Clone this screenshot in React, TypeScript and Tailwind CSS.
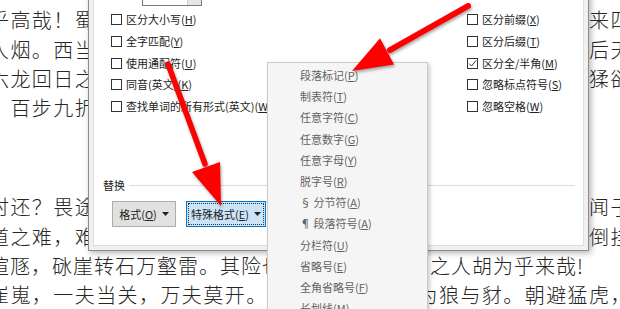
import React from 'react';

const docFont = { fontFamily: '"Noto Sans CJK SC", "Noto Sans", sans-serif' };

// one line of the document; the part under the dialog keeps its room but isn't painted
function DocLine({
  left,
  hidden = '',
  right = '',
  wide = true,
}: {
  left: string;
  hidden?: string;
  right?: string;
  wide?: boolean;
}) {
  return (
    <div
      className={`ml-[-11px] h-[29.3px] whitespace-nowrap text-[20px] leading-[29.3px] font-light text-[#262626] ${
        wide ? 'tracking-[1.43px]' : 'tracking-[1px]'
      }`}
    >
      {left}
      <span className="invisible">{hidden}</span>
      {right}
    </div>
  );
}

function Key({ k }: { k: string }) {
  return (
    <>
      (<span className="underline underline-offset-[1px]">{k}</span>)
    </>
  );
}

function CheckRow({ label, k, checked = false }: { label: string; k: string; checked?: boolean }) {
  return (
    <div className="flex h-[21.7px] items-center gap-[4px]">
      <span className="flex h-[11px] w-[11px] items-center justify-center border border-[#333] bg-white">
        {checked && (
          <svg width="9" height="9" viewBox="0 0 9 9">
            <path d="M1.2 4.6 L3.6 7 L7.9 1.6" fill="none" stroke="#333" strokeWidth="1" />
          </svg>
        )}
      </span>
      <span className="whitespace-nowrap">
        {label}
        <Key k={k} />
      </span>
    </div>
  );
}

function Caret() {
  return (
    <svg width="7" height="4" viewBox="0 0 7 4" className="ml-[5px]">
      <path d="M0 0 L7 0 L3.5 4 Z" fill="#222" />
    </svg>
  );
}

const menuItems: [string, string][] = [
  ['段落标记', 'P'],
  ['制表符', 'T'],
  ['任意字符', 'C'],
  ['任意数字', 'G'],
  ['任意字母', 'Y'],
  ['脱字号', 'R'],
  ['§ 分节符', 'A'],
  ['¶ 段落符号', 'A'],
  ['分栏符', 'U'],
  ['省略号', 'E'],
  ['全角省略号', 'F'],
  ['长划线', 'M'],
];

export default function App() {
  return (
    <div className="relative h-[309px] w-[620px] overflow-hidden bg-white" style={docFont}>
      {/* document text */}
      <div className="pt-[5.4px]">
        <DocLine left="乎高哉！蜀" hidden="道之难，难于上青天！蚕丛及鱼凫，开国何茫然！尔" right="来四万八千岁，" />
        <DocLine left="人烟。西当" hidden="太白有鸟道，可以横绝峨眉巅。地崩山摧壮士死，然" right="后天梯石栈相钩连。" />
        <DocLine left="六龙回日之" hidden="高标，下有冲波逆折之回川。黄鹤之飞尚不得过，猿" right="猱欲度愁攀援。" />
        <DocLine left="，百步九折" hidden="萦岩峦。" />
        <div className="h-[69.8px]" />
        <DocLine left="时还？畏途" hidden="巉岩不可攀。但见悲鸟号古木，雄飞雌从绕林间。又" right="闻子规啼夜月，愁空山。" />
        <DocLine left="道之难，难" hidden="于上青天，使人听此凋朱颜！连峰去天不盈尺，枯松" right="倒挂倚绝壁。" />
        <DocLine left="喧豗，砯崖转石万壑雷。其险也" hidden="如此，嗟尔远道" right="之人胡为乎来哉!" wide={false} />
        <DocLine left="崔嵬，一夫当关，万夫莫开。" hidden="所守或匪亲，化" right="为狼与豺。朝避猛虎，夕避长蛇，" />
      </div>

      {/* find & replace dialog */}
      <div className="absolute left-[88px] top-[-40px] h-[291px] w-[501px] border border-[#8c8c8c] bg-[#f0f0f0] p-[4px] shadow-[2px_2px_6px_rgba(0,0,0,0.3)]">
        <div className="flex h-full flex-col border border-[#dedede] bg-white text-[11px] leading-none text-[#222]">
          <div className="pl-[48px] pt-[18px]">
            <div className="flex h-[22px] w-[60px] border border-[#7a7a7a] bg-white">
              <div className="ml-auto w-[14px] border-l border-[#cfcfcf] bg-[#e6e6e6]" />
            </div>
          </div>

          <div className="mt-[3px] flex">
            <div className="w-[373px] pl-[17px]">
              <CheckRow label="区分大小写" k="H" />
              <CheckRow label="全字匹配" k="Y" />
              <CheckRow label="使用通配符" k="U" />
              <CheckRow label="同音(英文)" k="K" />
              <CheckRow label="查找单词的所有形式(英文)" k="W" />
            </div>
            <div>
              <CheckRow label="区分前缀" k="X" />
              <CheckRow label="区分后缀" k="T" />
              <CheckRow label="区分全/半角" k="M" checked />
              <CheckRow label="忽略标点符号" k="S" />
              <CheckRow label="忽略空格" k="W" />
            </div>
          </div>

          <div className="mt-[60px] flex h-[16px] items-center gap-[4px] pl-[9px] pr-[8px]">
            <span>替换</span>
            <div className="h-px flex-1 bg-[#dcdcdc]" />
          </div>

          <div className="mt-[8px] flex gap-[10px] pl-[18px]">
            <div className="flex h-[26px] w-[64px] items-center justify-center border border-[#adadad] bg-[#e1e1e1]">
              格式<Key k="O" />
              <Caret />
            </div>
            <div className="flex h-[26px] w-[80px] items-center justify-center border border-[#0078d7] bg-[#cce4f7] p-[1px]">
              <div className="flex h-full w-full items-center justify-center border border-dotted border-[#333]">
                特殊格式<Key k="E" />
                <Caret />
              </div>
            </div>
          </div>
        </div>
      </div>

      {/* special format menu */}
      <div className="absolute left-[267px] top-[62px] w-[161px] border border-[#cbcbcb] bg-[#f5f5f5] pt-[2px] text-[11px] leading-none text-[#626262] shadow-[2px_2px_4px_rgba(0,0,0,0.2)]">
        {menuItems.map(([label, k], i) => (
          <div key={i} className="flex h-[21.2px] items-center whitespace-nowrap pl-[32px]">
            {label}
            <Key k={k} />
          </div>
        ))}
      </div>

      {/* red annotation arrows */}
      <svg
        className="pointer-events-none absolute left-0 top-0"
        width="620"
        height="309"
        viewBox="0 0 620 309"
        style={{ filter: 'drop-shadow(1px 2px 1.5px rgba(0,0,0,0.35))' }}
      >
        <line x1="468" y1="6" x2="390" y2="50" stroke="#ff0000" strokeWidth="6" strokeLinecap="round" />
        <polygon points="352,71 394,64.5 380,38.3" fill="#ff0000" />
        <line x1="168" y1="64" x2="205" y2="164" stroke="#ff0000" strokeWidth="5.5" strokeLinecap="round" />
        <polygon points="221,206 220,162 192,172" fill="#ff0000" />
      </svg>
    </div>
  );
}
